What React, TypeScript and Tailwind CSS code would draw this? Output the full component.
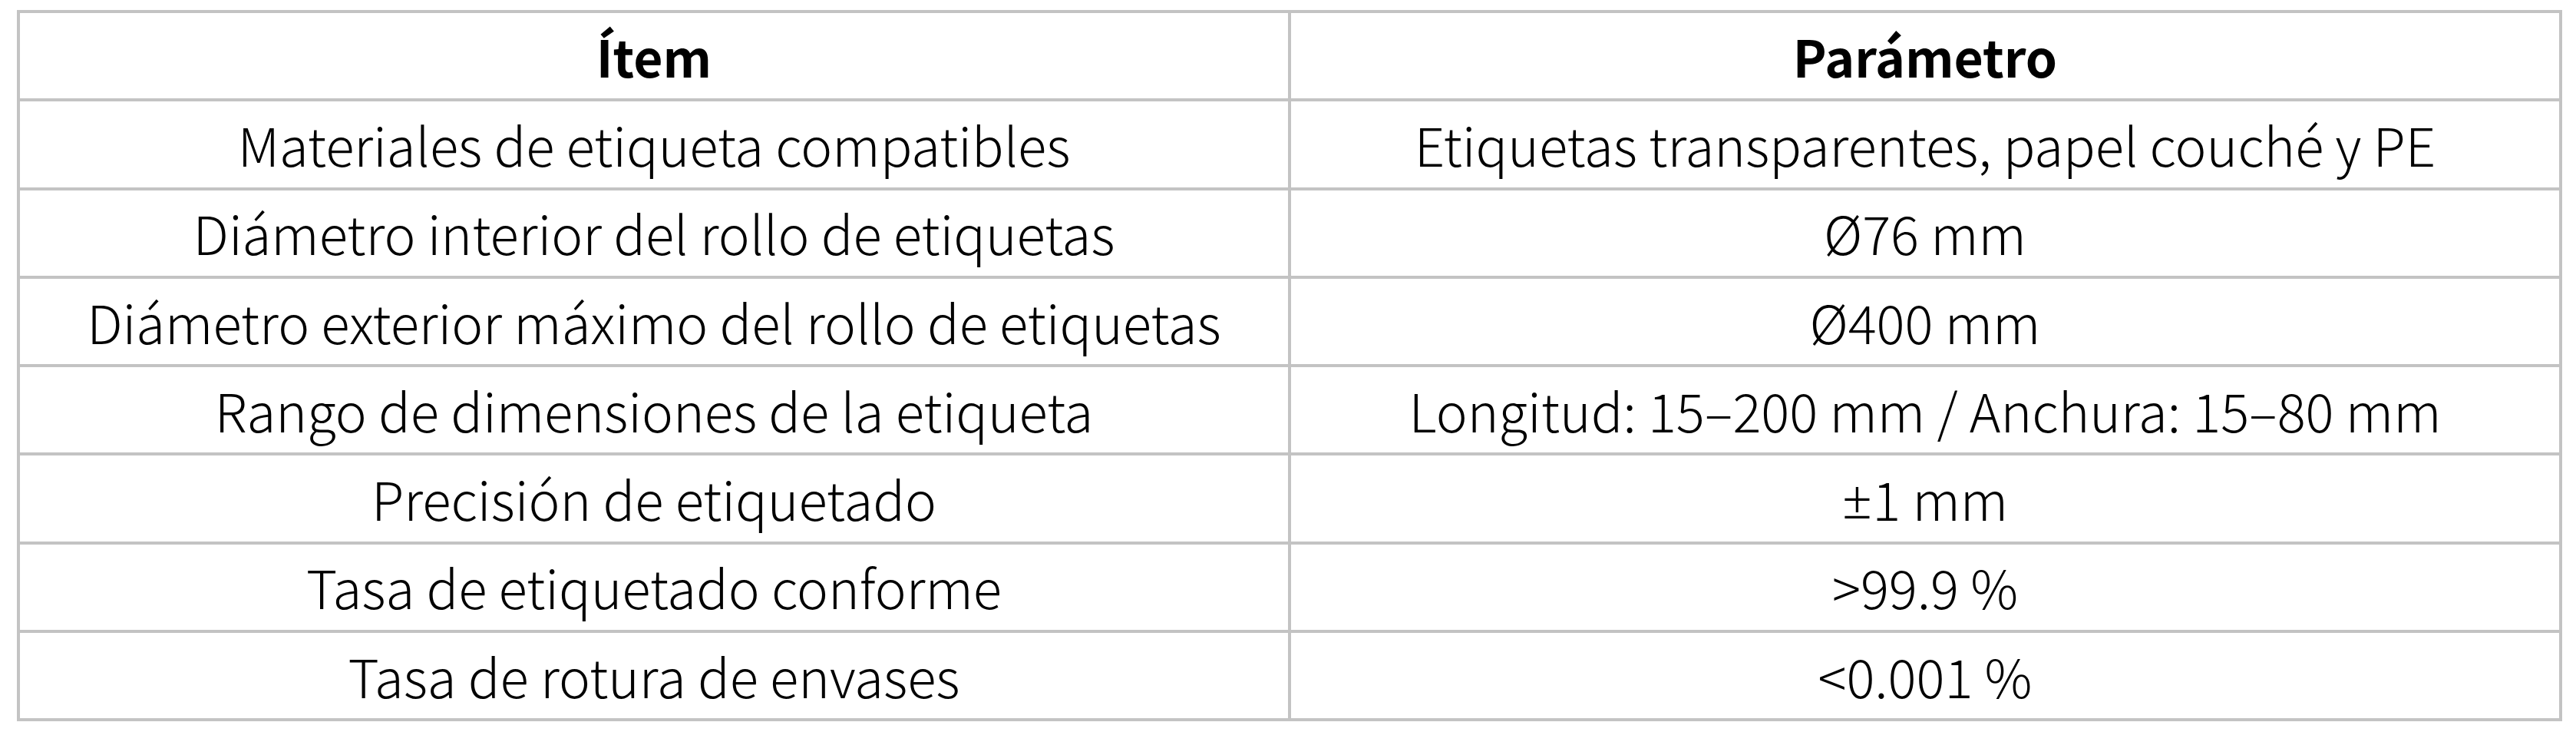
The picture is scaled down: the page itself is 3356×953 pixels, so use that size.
import React from "react";

const rows: [string, React.ReactNode][] = [
  ["Materiales de etiqueta compatibles", "Etiquetas transparentes, papel couché y PE"],
  ["Diámetro interior del rollo de etiquetas", "Ø76 mm"],
  ["Diámetro exterior máximo del rollo de etiquetas", "Ø400 mm"],
  ["Rango de dimensiones de la etiqueta", "Longitud: 15–200 mm / Anchura: 15–80 mm"],
  ["Precisión de etiquetado", <><span className="font-['Noto_Sans',sans-serif]">±</span>1 mm</>],
  ["Tasa de etiquetado conforme", ">99.9 %"],
  ["Tasa de rotura de envases", "<0.001 %"],
];

export default function App() {
  return (
    <div className="w-[3356px] h-[953px] bg-white pt-[13px] pl-[22px]" style={{ fontFamily: '"Noto Sans CJK SC", "Noto Sans", sans-serif' }}>
      <div className="grid grid-cols-2 w-[3316px] border-l-4 border-t-4 border-[#c3c3c3] text-black">
        <div className="h-[115.25px] border-r-4 border-b-4 border-[#c3c3c3] flex items-center justify-center text-[66px] font-bold">Ítem</div>
        <div className="h-[115.25px] border-r-4 border-b-4 border-[#c3c3c3] flex items-center justify-center text-[66px] font-bold">Parámetro</div>
        {rows.map(([a, b]) => (
          <React.Fragment key={a}>
            <div className="h-[115.25px] border-r-4 border-b-4 border-[#c3c3c3] flex items-center justify-center text-[69px] font-light whitespace-nowrap">{a}</div>
            <div className="h-[115.25px] border-r-4 border-b-4 border-[#c3c3c3] flex items-center justify-center text-[69px] font-light whitespace-nowrap">{b}</div>
          </React.Fragment>
        ))}
      </div>
    </div>
  );
}
